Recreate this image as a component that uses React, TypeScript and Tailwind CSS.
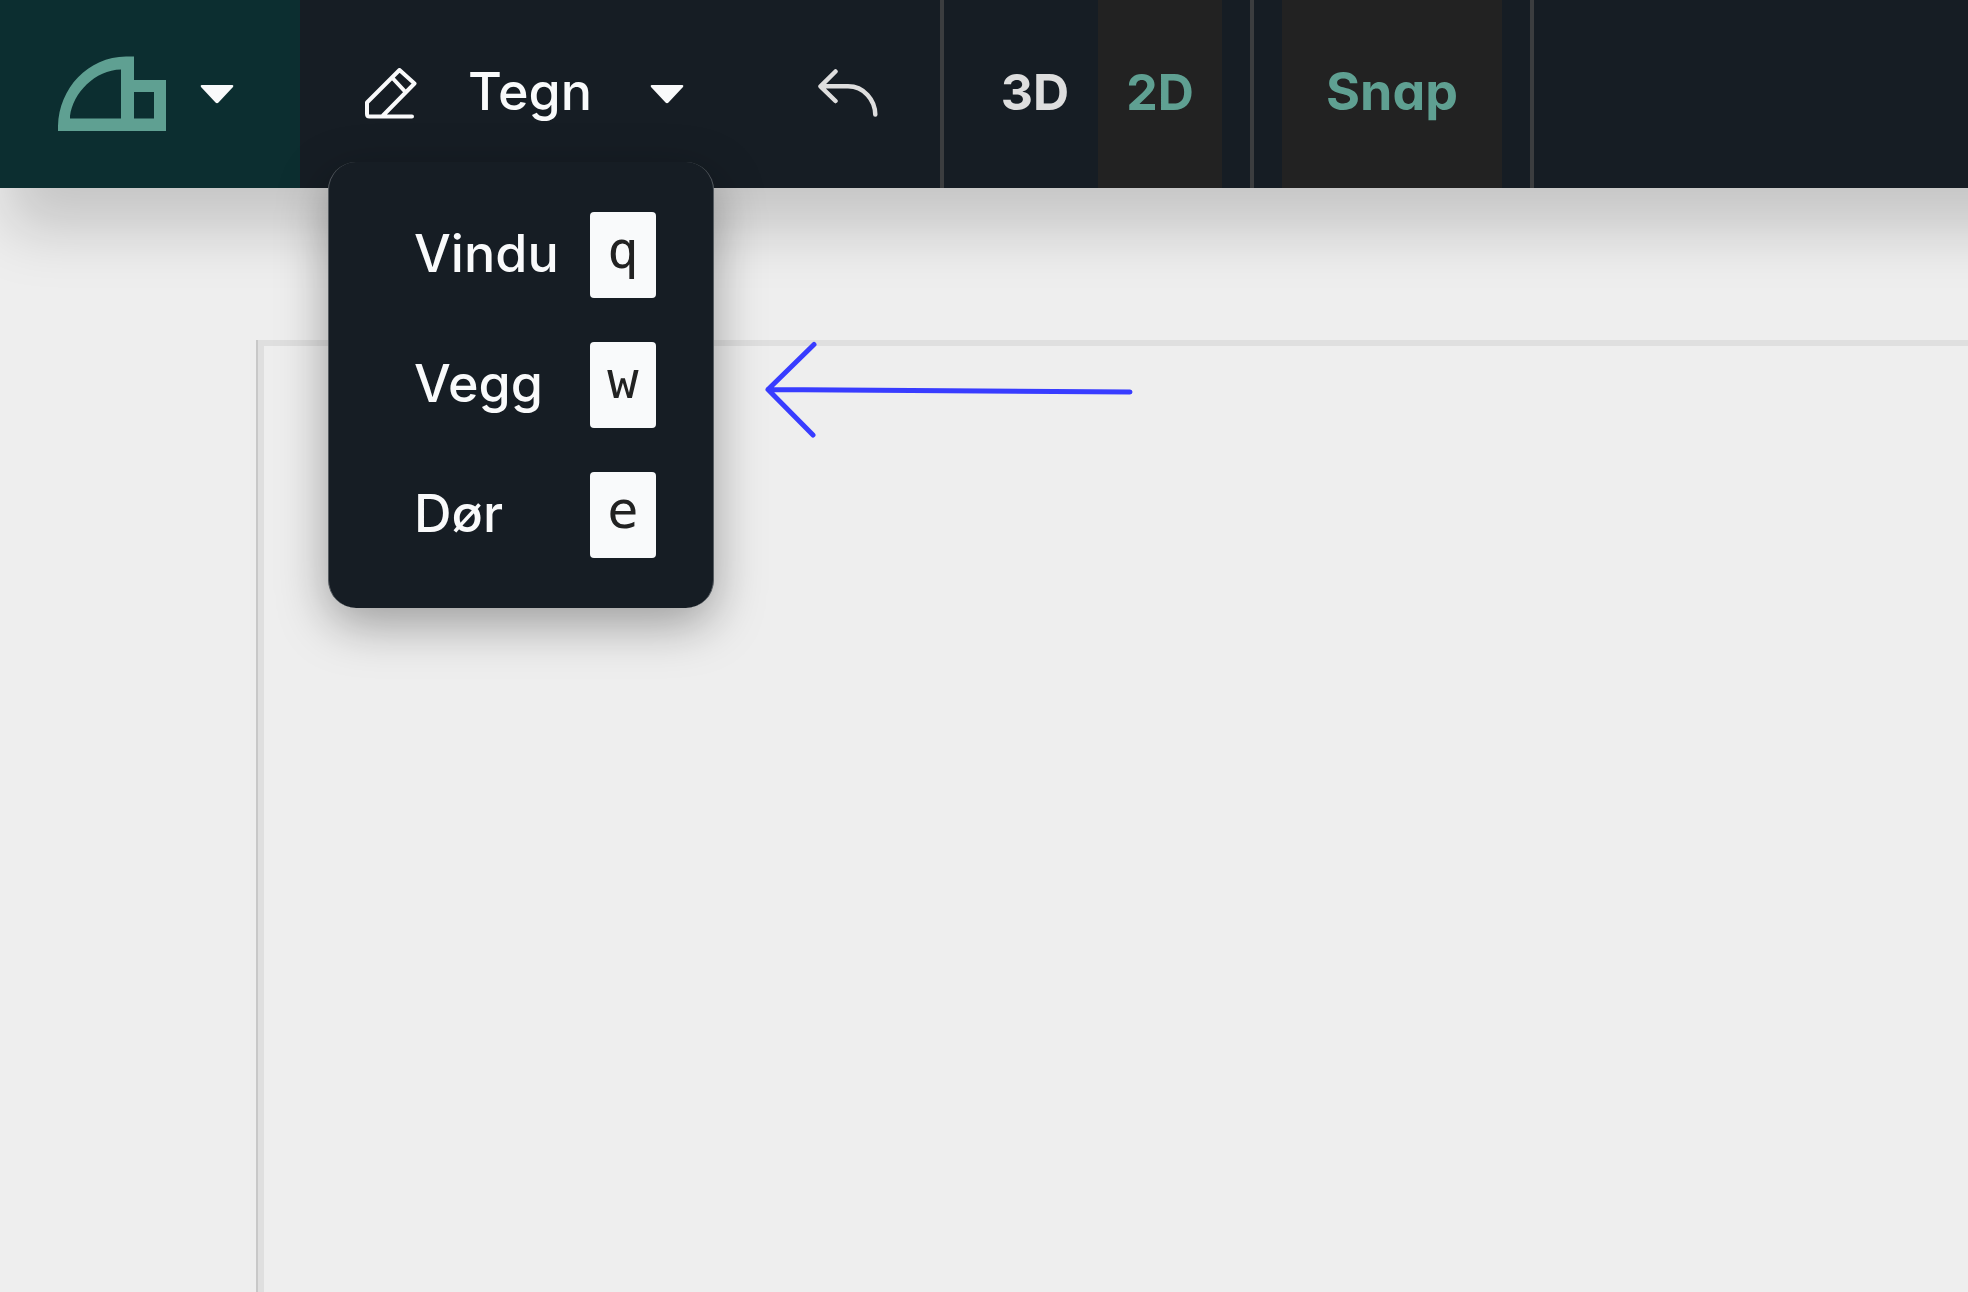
const tools = [
  { label: 'Vindu', shortcut: 'q' },
  { label: 'Vegg', shortcut: 'w' },
  { label: 'Dør', shortcut: 'e' },
];

function Logo() {
  return (
    <svg className="h-[75px] w-[108px]" viewBox="0 0 108 75" fill="#5fa092" fillRule="evenodd" aria-hidden="true">
      <path d="M0 75V70C1 32 30 1 68 0.500H76V24H108V75ZM12 62.500H63V13.500C37 14 15 37 12 60ZM76 36V62.500H96V36Z" />
    </svg>
  );
}

function Caret() {
  return (
    <svg className="h-5 w-[34px]" viewBox="0 0 34 20" fill="#f9fafb" aria-hidden="true">
      <path d="M1.500 1H32.500Q34 1.500 33 3L18.500 18.500Q17 20 15.500 18.500L1 3Q0 1.500 1.500 1Z" />
    </svg>
  );
}

function PencilIcon() {
  return (
    <svg
      className="h-[52px] w-[52px]"
      viewBox="46 28 52 52"
      fill="none"
      stroke="#f9fafb"
      strokeWidth="4"
      strokeLinecap="round"
      strokeLinejoin="round"
      aria-hidden="true"
    >
      <path d="M93 76.500H50.500Q48 76.500 48 74V62.500L80.500 30L95.500 43.500L64 75.500M73 37.500L86 51.500" />
    </svg>
  );
}

function UndoIcon() {
  return (
    <svg
      className="h-[50px] w-[60px]"
      viewBox="218 30 60 50"
      fill="none"
      stroke="#dedede"
      strokeWidth="4.500"
      strokeLinecap="round"
      strokeLinejoin="round"
      aria-hidden="true"
    >
      <path d="M235.500 32.500L220.500 47.300L235.500 62M221 47.300H248C264 47.300 275 61 275.300 75.500" />
    </svg>
  );
}

function PointerArrow() {
  return (
    <svg
      className="pointer-events-none absolute top-[340px] left-[764px] h-[100px] w-[370px]"
      viewBox="0 0 370 100"
      fill="none"
      stroke="#383cff"
      strokeWidth="5"
      strokeLinecap="round"
      strokeLinejoin="round"
      aria-hidden="true"
    >
      <path d="M366 52L4 49.500M50 4.500L4 49.500L49 95" />
    </svg>
  );
}

export default function App() {
  return (
    <div className="relative flex min-h-screen flex-col overflow-hidden bg-[#eeeeee] font-['Inter',sans-serif] text-[52px] leading-none font-medium text-gray-50 [font-feature-settings:'cv11']">
      <header className="relative z-10 -mr-24 flex h-[188px] items-stretch bg-[#161d24] shadow-[0_50px_60px_-8px_rgba(0,0,0,0.17)]">
        <button
          type="button"
          aria-label="Hovedmeny"
          className="flex w-[300px] items-center gap-[34px] bg-[#0c2e30] pb-px pl-[58px]"
        >
          <Logo />
          <Caret />
        </button>

        <div className="relative flex">
          <button type="button" aria-expanded="true" className="flex w-[414px] items-center pl-[65px]">
            <PencilIcon />
            <span className="w-[180px] pb-1 pl-[51px] text-left">Tegn</span>
            <span className="pl-[53px]">
              <Caret />
            </span>
          </button>
          <ul className="absolute top-[162px] left-7 flex w-[386px] flex-col gap-11 rounded-[28px] border-x border-[#555b60] bg-[#161d24] py-[50px] pr-[57px] pl-[85px] shadow-[0_16px_50px_rgba(0,0,0,0.35)]">
            {tools.map((tool) => (
              <li key={tool.label}>
                <button type="button" className="flex w-full items-center justify-between">
                  <span className="pb-0.5">{tool.label}</span>
                  <kbd className="flex h-[86px] w-[66px] justify-center rounded bg-gray-50 pt-2 font-['DejaVu_Sans_Mono',monospace] text-[52px] leading-[60px] font-normal text-[#222222]">
                    {tool.shortcut}
                  </kbd>
                </button>
              </li>
            ))}
          </ul>
        </div>

        <div className="flex w-[230px] border-r-4 border-[#3b3d3f]">
          <button type="button" aria-label="Angre" className="flex w-full items-center pl-[104px]">
            <UndoIcon />
          </button>
        </div>

        <div className="flex border-r-4 border-[#3b3d3f] px-7 text-[50px] font-bold">
          <button type="button" className="w-[126px] pb-1 text-[#dedede]">
            3D
          </button>
          <button type="button" aria-pressed="true" className="w-[124px] bg-[#222222] pb-1 text-[#5fa092]">
            2D
          </button>
        </div>

        <div className="flex border-r-4 border-[#3b3d3f] px-7 font-bold">
          <button type="button" aria-pressed="true" className="w-[220px] bg-[#222222] pb-1 text-[#5fa092]">
            Snap
          </button>
        </div>
      </header>

      <main className="flex flex-1 flex-col pt-[152px] pl-64">
        <div className="flex flex-1 border-l-2 border-[#c8c8c8]">
          <div className="flex-1 border-t-6 border-l-6 border-[#dfdfdf]" />
        </div>
      </main>

      <PointerArrow />
    </div>
  );
}
